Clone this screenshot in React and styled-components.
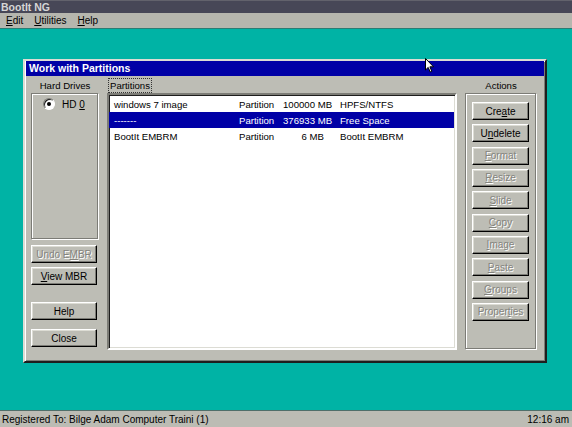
import styled, { createGlobalStyle } from "styled-components";

const GlobalStyle = createGlobalStyle`
  html, body {
    margin: 0;
    padding: 0;
    background: #00b3a5;
  }
  body {
    font-family: "Liberation Sans", Arial, sans-serif;
    font-size: 9.6px;
    color: #000;
  }
`;

const Screen = styled.div`
  width: 572px;
  height: 427px;
  display: flex;
  flex-direction: column;
  overflow: hidden;
`;

const TitleBar = styled.div`
  height: 13px;
  box-sizing: border-box;
  border-top: 1px solid #62626c;
  background: #474757;
  color: #d6d6d6;
  font-weight: bold;
  font-size: 10.5px;
  line-height: 12px;
  padding-left: 1px;
`;

const MenuBar = styled.div`
  height: 15px;
  background: #b6b6ae;
  border-bottom: 1px solid #2b7c74;
  display: flex;
  align-items: center;
  padding-left: 6px;
  gap: 11px;
  font-size: 10px;
`;

const Desktop = styled.div`
  flex: 1;
  position: relative;
  background: #00b3a5;
  padding: 30px 0 0 23px;
`;

const Dialog = styled.div`
  width: 524px;
  box-sizing: border-box;
  background: #bdbdb5;
  border: 2px solid;
  border-color: #dcdcd4 #1e1e1e #1e1e1e #dcdcd4;
  box-shadow: inset 1px 1px #ffffff, inset -1px -1px #7c7c76;
  padding-bottom: 11px;
`;

const DialogTitle = styled.div`
  height: 15px;
  margin: 0 1px;
  background: #0000a6;
  color: #fff;
  font-weight: bold;
  font-size: 10.5px;
  line-height: 15px;
  padding-left: 3px;
`;

const DialogBody = styled.div`
  display: grid;
  grid-template-columns: 68px 350px 72px;
  grid-template-rows: 16px 257px;
  column-gap: 8px;
  padding: 1px 8px 0 6px;
`;

const ColumnLabel = styled.div`
  display: flex;
  align-items: center;
  justify-content: ${(p) => (p.$left ? "flex-start" : "center")};
  padding-left: ${(p) => (p.$left ? "2px" : "0")};
`;

const FocusLabel = styled.span`
  outline: 1px dotted #333;
  padding: 0 1px;
  line-height: 13px;
`;

const Column = styled.div`
  display: flex;
  flex-direction: column;
`;

const GroupBox = styled.div`
  box-sizing: border-box;
  height: ${(p) => p.$height || "100%"};
  border: 1px solid;
  border-color: #7c7c76 #ffffff #ffffff #7c7c76;
  box-shadow: inset -1px -1px #7c7c76, inset 1px 1px #ffffff;
`;

const DriveList = styled(GroupBox)`
  padding: 4px 0 0 11px;
`;

const RadioRow = styled.label`
  display: flex;
  align-items: center;
  gap: 7px;
  font-size: 10px;
`;

const Radio = styled.span`
  width: 12px;
  height: 12px;
  box-sizing: border-box;
  border-radius: 50%;
  background: #fff;
  border: 1px solid;
  border-color: #7c7c76 #fff #fff #7c7c76;
  box-shadow: inset 1px 1px #1e1e1e;
  display: flex;
  align-items: center;
  justify-content: center;

  &::after {
    content: "";
    width: 4px;
    height: 4px;
    border-radius: 50%;
    background: #000;
  }
`;

const Button = styled.div`
  box-sizing: border-box;
  width: ${(p) => p.$width || "100%"};
  height: 18px;
  margin-top: ${(p) => p.$top || "0"};
  background: #bdbdb5;
  border: 1px solid;
  border-color: #ffffff #000 #000 #ffffff;
  box-shadow: inset -1px -1px #7c7c76, inset 1px 1px #dcdcd4;
  display: flex;
  align-items: center;
  justify-content: center;
  font-size: 10px;
  color: ${(p) => (p.$disabled ? "#84847e" : "#000")};
  text-shadow: ${(p) => (p.$disabled ? "1px 1px #ffffff" : "none")};
`;

const ListBox = styled.div`
  box-sizing: border-box;
  height: 100%;
  background: #fff;
  border: 2px solid;
  border-color: #7c7c76 #ffffff #ffffff #7c7c76;
  box-shadow: inset 1px 1px #1e1e1e, inset -1px -1px #dcdcd4;
  padding: 1px 0 0 0;
`;

const Row = styled.div`
  display: grid;
  grid-template-columns: 125px 44px 41px 1fr;
  height: 16px;
  align-items: center;
  padding-left: 5px;
  margin-right: 1px;
  background: ${(p) => (p.$selected ? "#0000a6" : "transparent")};
  color: ${(p) => (p.$selected ? "#fff" : "#000")};
  font-size: 9.6px;
`;

const Cell = styled.span`
  white-space: nowrap;
  text-align: ${(p) => (p.$right ? "right" : "left")};
  padding-left: ${(p) => p.$pad || "0"};
`;

const ActionBox = styled(GroupBox)`
  display: flex;
  flex-direction: column;
  align-items: center;
  gap: 4.33px;
  padding: 8px 1px 0 0;
`;

const StatusBar = styled.div`
  height: 17px;
  box-sizing: border-box;
  background: #bcbcb4;
  border-top: 1px solid #4f6f6a;
  display: flex;
  align-items: center;
  justify-content: space-between;
  padding: 0 3px 0 2px;
  font-size: 10px;
`;

const Cursor = styled.svg`
  position: absolute;
  left: 425px;
  top: 29px;
`;

const partitions = [
  { name: "windows 7 image", type: "Partition", size: "100000 MB", fs: "HPFS/NTFS" },
  { name: "-------", type: "Partition", size: "376933 MB", fs: "Free Space", selected: true },
  { name: "BootIt EMBRM", type: "Partition", size: "6 MB", fs: "BootIt EMBRM" },
];

const actions = [
  { pre: "Cre", key: "a", post: "te" },
  { pre: "U", key: "n", post: "delete" },
  { pre: "", key: "F", post: "ormat", disabled: true },
  { pre: "", key: "R", post: "esize", disabled: true },
  { pre: "", key: "S", post: "lide", disabled: true },
  { pre: "", key: "C", post: "opy", disabled: true },
  { pre: "", key: "I", post: "mage", disabled: true },
  { pre: "", key: "P", post: "aste", disabled: true },
  { pre: "", key: "G", post: "roups", disabled: true },
  { pre: "Proper", key: "t", post: "ies", disabled: true },
];

export default function App() {
  return (
    <>
      <GlobalStyle />
      <Screen>
        <TitleBar>BootIt NG</TitleBar>
        <MenuBar>
          <span><u>E</u>dit</span>
          <span><u>U</u>tilities</span>
          <span><u>H</u>elp</span>
        </MenuBar>
        <Desktop>
          <Dialog>
            <DialogTitle>Work with Partitions</DialogTitle>
            <DialogBody>
              <ColumnLabel>Hard Drives</ColumnLabel>
              <ColumnLabel $left>
                <FocusLabel>Partitions</FocusLabel>
              </ColumnLabel>
              <ColumnLabel>Actions</ColumnLabel>

              <Column>
                <DriveList $height="147px">
                  <RadioRow>
                    <Radio />
                    <span>HD <u>0</u></span>
                  </RadioRow>
                </DriveList>
                <Button $width="66px" $top="5px" $disabled>
                  <span>Undo E<u>M</u>BR</span>
                </Button>
                <Button $width="66px" $top="4px">
                  <span><u>V</u>iew MBR</span>
                </Button>
                <Button $width="66px" $top="17px">Help</Button>
                <Button $width="66px" $top="9px">Close</Button>
              </Column>

              <ListBox>
                {partitions.map((p) => (
                  <Row key={p.size} $selected={p.selected}>
                    <Cell>{p.name}</Cell>
                    <Cell>{p.type}</Cell>
                    <Cell $right>{p.size}</Cell>
                    <Cell $pad="16px">{p.fs}</Cell>
                  </Row>
                ))}
              </ListBox>

              <ActionBox>
                {actions.map((a) => (
                  <Button key={a.pre + a.key} $width="57px" $disabled={a.disabled}>
                    <span>
                      {a.pre}
                      <u>{a.key}</u>
                      {a.post}
                    </span>
                  </Button>
                ))}
              </ActionBox>
            </DialogBody>
          </Dialog>
          <Cursor width="10" height="16" viewBox="0 0 10 16">
            <path
              d="M0.5 0.5 L0.5 12 L3.2 9.4 L5.2 14 L6.8 13.3 L4.9 8.8 L8.5 8.8 Z"
              fill="#fff"
              stroke="#000"
              strokeWidth="1"
            />
          </Cursor>
        </Desktop>
        <StatusBar>
          <span>Registered To: Bilge Adam Computer Traini (1)</span>
          <span>12:16 am</span>
        </StatusBar>
      </Screen>
    </>
  );
}
